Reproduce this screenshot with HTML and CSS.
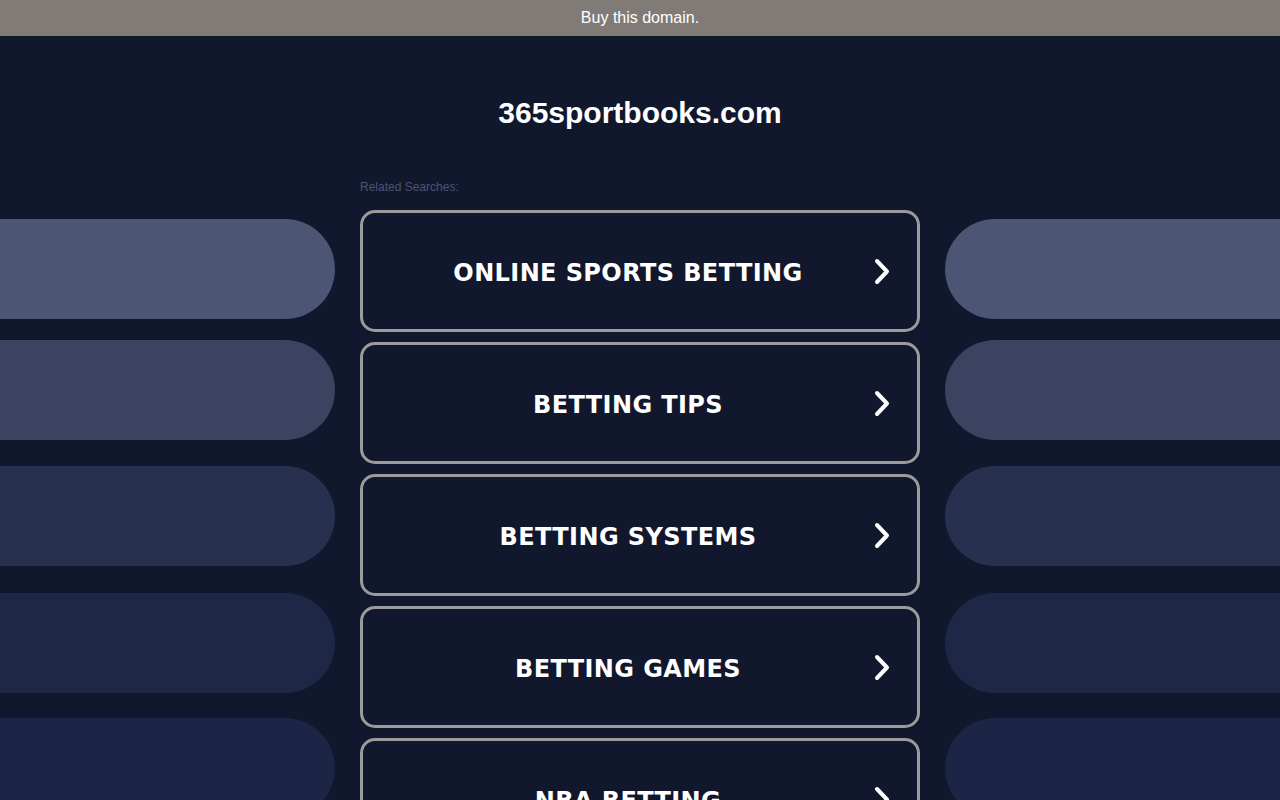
FILE: index.html
```html
<!DOCTYPE html>
<html lang="en">
<head>
<meta charset="utf-8">
<title>365sportbooks.com</title>
<link rel="stylesheet" href="styles.css">
</head>
<body>
<div class="topbar"><a class="buy" href="#">Buy this domain.</a></div>
<h1 class="domain">365sportbooks.com</h1>
<div class="main">
  <div class="side side-left">
    <div class="pill c1"></div>
    <div class="pill c2"></div>
    <div class="pill c3"></div>
    <div class="pill c4"></div>
    <div class="pill c5"></div>
  </div>
  <div class="center">
    <div class="related">Related Searches:</div>
    <a class="btn" href="#"><span class="label">ONLINE SPORTS BETTING</span><svg class="chev" viewBox="0 0 16 27" width="16" height="27"><path d="M3 3 L13 13.5 L3 24"/></svg></a>
    <a class="btn" href="#"><span class="label">BETTING TIPS</span><svg class="chev" viewBox="0 0 16 27" width="16" height="27"><path d="M3 3 L13 13.5 L3 24"/></svg></a>
    <a class="btn" href="#"><span class="label">BETTING SYSTEMS</span><svg class="chev" viewBox="0 0 16 27" width="16" height="27"><path d="M3 3 L13 13.5 L3 24"/></svg></a>
    <a class="btn" href="#"><span class="label">BETTING GAMES</span><svg class="chev" viewBox="0 0 16 27" width="16" height="27"><path d="M3 3 L13 13.5 L3 24"/></svg></a>
    <a class="btn" href="#"><span class="label">NBA BETTING</span><svg class="chev" viewBox="0 0 16 27" width="16" height="27"><path d="M3 3 L13 13.5 L3 24"/></svg></a>
  </div>
  <div class="side side-right">
    <div class="pill c1"></div>
    <div class="pill c2"></div>
    <div class="pill c3"></div>
    <div class="pill c4"></div>
    <div class="pill c5"></div>
  </div>
</div>
</body>
</html>
```
FILE: styles.css
```css
html, body {
  margin: 0;
  padding: 0;
}
body {
  background: #11172c;
  font-family: "Liberation Sans", Arial, sans-serif;
  height: 800px;
  overflow: hidden;
}
.topbar {
  height: 36px;
  background: #807b77;
  display: flex;
  align-items: center;
  justify-content: center;
}
.buy {
  color: #ffffff;
  font-size: 16px;
  text-decoration: none;
  line-height: 18px;
}
.domain {
  margin: 59px 0 0;
  text-align: center;
  color: #ffffff;
  font-size: 30px;
  font-weight: bold;
  line-height: 35px;
}
.main {
  display: grid;
  grid-template-columns: 1fr 560px 1fr;
  column-gap: 25px;
  margin-top: 49px;
}
.side {
  display: flex;
  flex-direction: column;
  padding-top: 40px;
}
.pill {
  height: 100px;
  flex: none;
}
.side-left .pill {
  border-radius: 0 50px 50px 0;
}
.side-right .pill {
  border-radius: 50px 0 0 50px;
}
.c1 { background: #4c5573; }
.c2 { background: #3b4361; margin-top: 21px; }
.c3 { background: #28304f; margin-top: 26px; }
.c4 { background: #1f2747; margin-top: 27px; }
.c5 { background: #1c2545; margin-top: 25px; }
.center {
  display: flex;
  flex-direction: column;
}
.related {
  color: #4b5474;
  font-size: 12px;
  line-height: 14px;
  margin-top: 1px;
  margin-bottom: 16px;
}
.btn {
  box-sizing: border-box;
  height: 122px;
  margin-bottom: 10px;
  border: 3px solid #9b9b9b;
  border-radius: 15px;
  display: flex;
  align-items: center;
  padding: 0 27px 0 19px;
  text-decoration: none;
  flex: none;
}
.label {
  flex: 1;
  text-align: center;
  color: #ffffff;
  font-family: "DejaVu Sans", Verdana, sans-serif;
  font-weight: bold;
  font-size: 24px;
  letter-spacing: 0.4px;
  padding-top: 4px;
}
.chev {
  flex: none;
  display: block;
}
.chev path {
  fill: none;
  stroke: #ffffff;
  stroke-width: 4;
  stroke-linecap: round;
  stroke-linejoin: round;
}
```
